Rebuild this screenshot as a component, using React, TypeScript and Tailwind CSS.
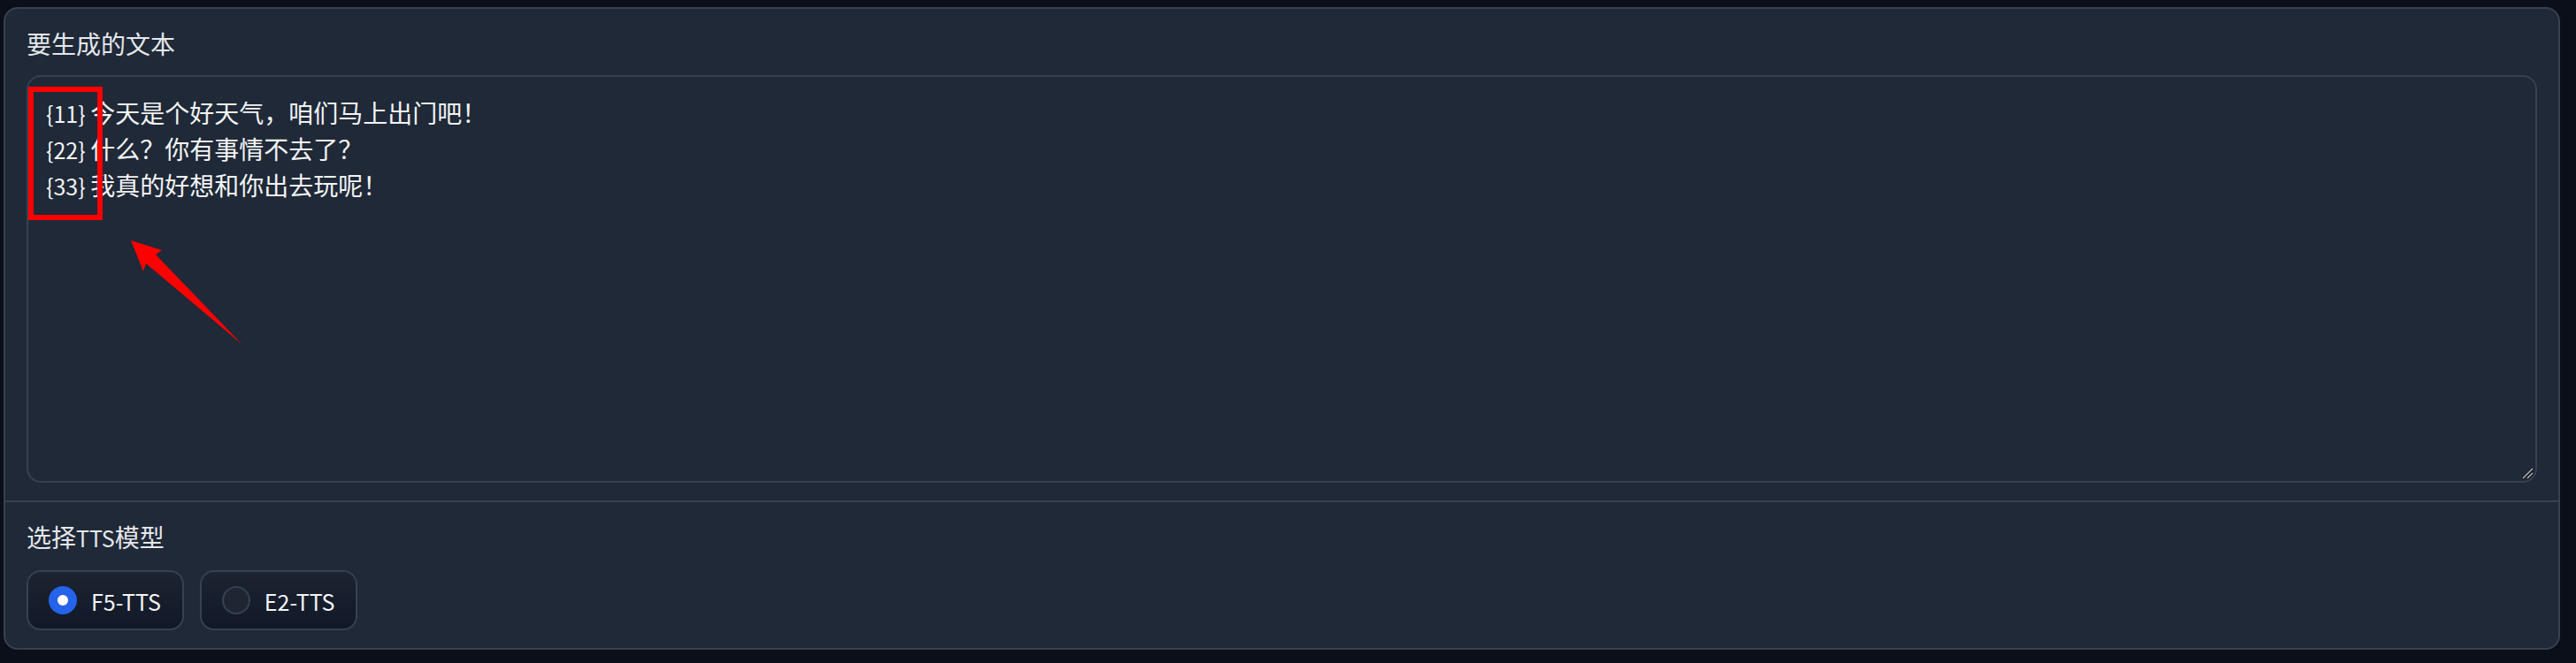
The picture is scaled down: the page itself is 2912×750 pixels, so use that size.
import React from "react";

const FONT = { fontFamily: '"Noto Sans CJK SC", "Noto Sans", sans-serif' };

function Mixed({ text }: { text: string }) {
  const parts = text.match(/[\x20-\x7e]+|[^\x20-\x7e]+/g) || [];
  return (
    <>
      {parts.map((p, i) =>
        /^[\x20-\x7e]+$/.test(p) ? (
          <span key={i} className="text-[25px]">
            {p}
          </span>
        ) : (
          <span key={i}>{p}</span>
        )
      )}
    </>
  );
}

function Radio({ label, checked }: { label: string; checked?: boolean }) {
  return (
    <label className="flex h-[68px] items-center gap-[16px] rounded-[16px] border-2 border-[#374151] bg-gradient-to-t from-[#111827] to-[#1c2331] pl-[23px] pr-[24px] text-[28px] leading-[40px] text-[#f3f4f6]">
      {checked ? (
        <span className="flex h-[32px] w-[32px] items-center justify-center rounded-full bg-[#2563eb]">
          <span className="h-[12px] w-[12px] rounded-full bg-white" />
        </span>
      ) : (
        <span className="h-[32px] w-[32px] rounded-full border-2 border-[#374151] bg-[#1f2533]" />
      )}
      <span>
        <Mixed text={label} />
      </span>
    </label>
  );
}

export default function App() {
  const lines = [
    "{11} 今天是个好天气，咱们马上出门吧！",
    "{22} 什么？你有事情不去了？",
    "{33} 我真的好想和你出去玩呢！",
  ];
  return (
    <div className="relative h-[750px] w-full overflow-hidden bg-[#0b0f19] pl-[4px] pt-[8px]" style={FONT}>
      <div className="flex h-[727px] w-[2890px] flex-col overflow-hidden rounded-[16px] border-2 border-[#374151] bg-[#1f2937]">
        <div className="flex flex-col border-b-2 border-[#374151] px-[24px] pb-[20px] pt-[20px]">
          <span className="mb-[16px] text-[28px] leading-[39px] text-[#e5e7eb]">要生成的文本</span>
          <div className="relative h-[461px] w-full rounded-[16px] border-2 border-[#374151] bg-[#1f2937] px-[20px] py-[20px] text-[28px] leading-[40px] text-[#f3f4f6]">
            {lines.map((l, i) => (
              <div key={i} className="whitespace-pre">
                <Mixed text={l} />
              </div>
            ))}
            <svg className="absolute bottom-[1px] right-[1px]" width="16" height="16" viewBox="0 0 16 16">
              <line x1="3" y1="14" x2="14" y2="3" stroke="#111" strokeWidth="3" />
              <line x1="3" y1="14" x2="14" y2="3" stroke="#b8bcc4" strokeWidth="1.5" />
              <line x1="8" y1="14" x2="14" y2="8" stroke="#111" strokeWidth="3" />
              <line x1="8" y1="14" x2="14" y2="8" stroke="#b8bcc4" strokeWidth="1.5" />
            </svg>
          </div>
        </div>
        <div className="flex flex-col px-[24px] pt-[20px]">
          <span className="mb-[17px] text-[28px] leading-[39px] text-[#e5e7eb]">
            <Mixed text="选择TTS模型" />
          </span>
          <div className="flex gap-[18px]">
            <Radio label="F5-TTS" checked />
            <Radio label="E2-TTS" />
          </div>
        </div>
      </div>

      <svg
        className="pointer-events-none absolute left-0 top-0"
        width="2912"
        height="750"
        viewBox="0 0 2912 750"
      >
        <rect x="35" y="101" width="78" height="145" fill="none" stroke="#ff0000" strokeWidth="6" />
        <polygon points="148,272 183,283 176,288 274,390 165,298 162,307" fill="#ff0000" />
      </svg>
    </div>
  );
}
